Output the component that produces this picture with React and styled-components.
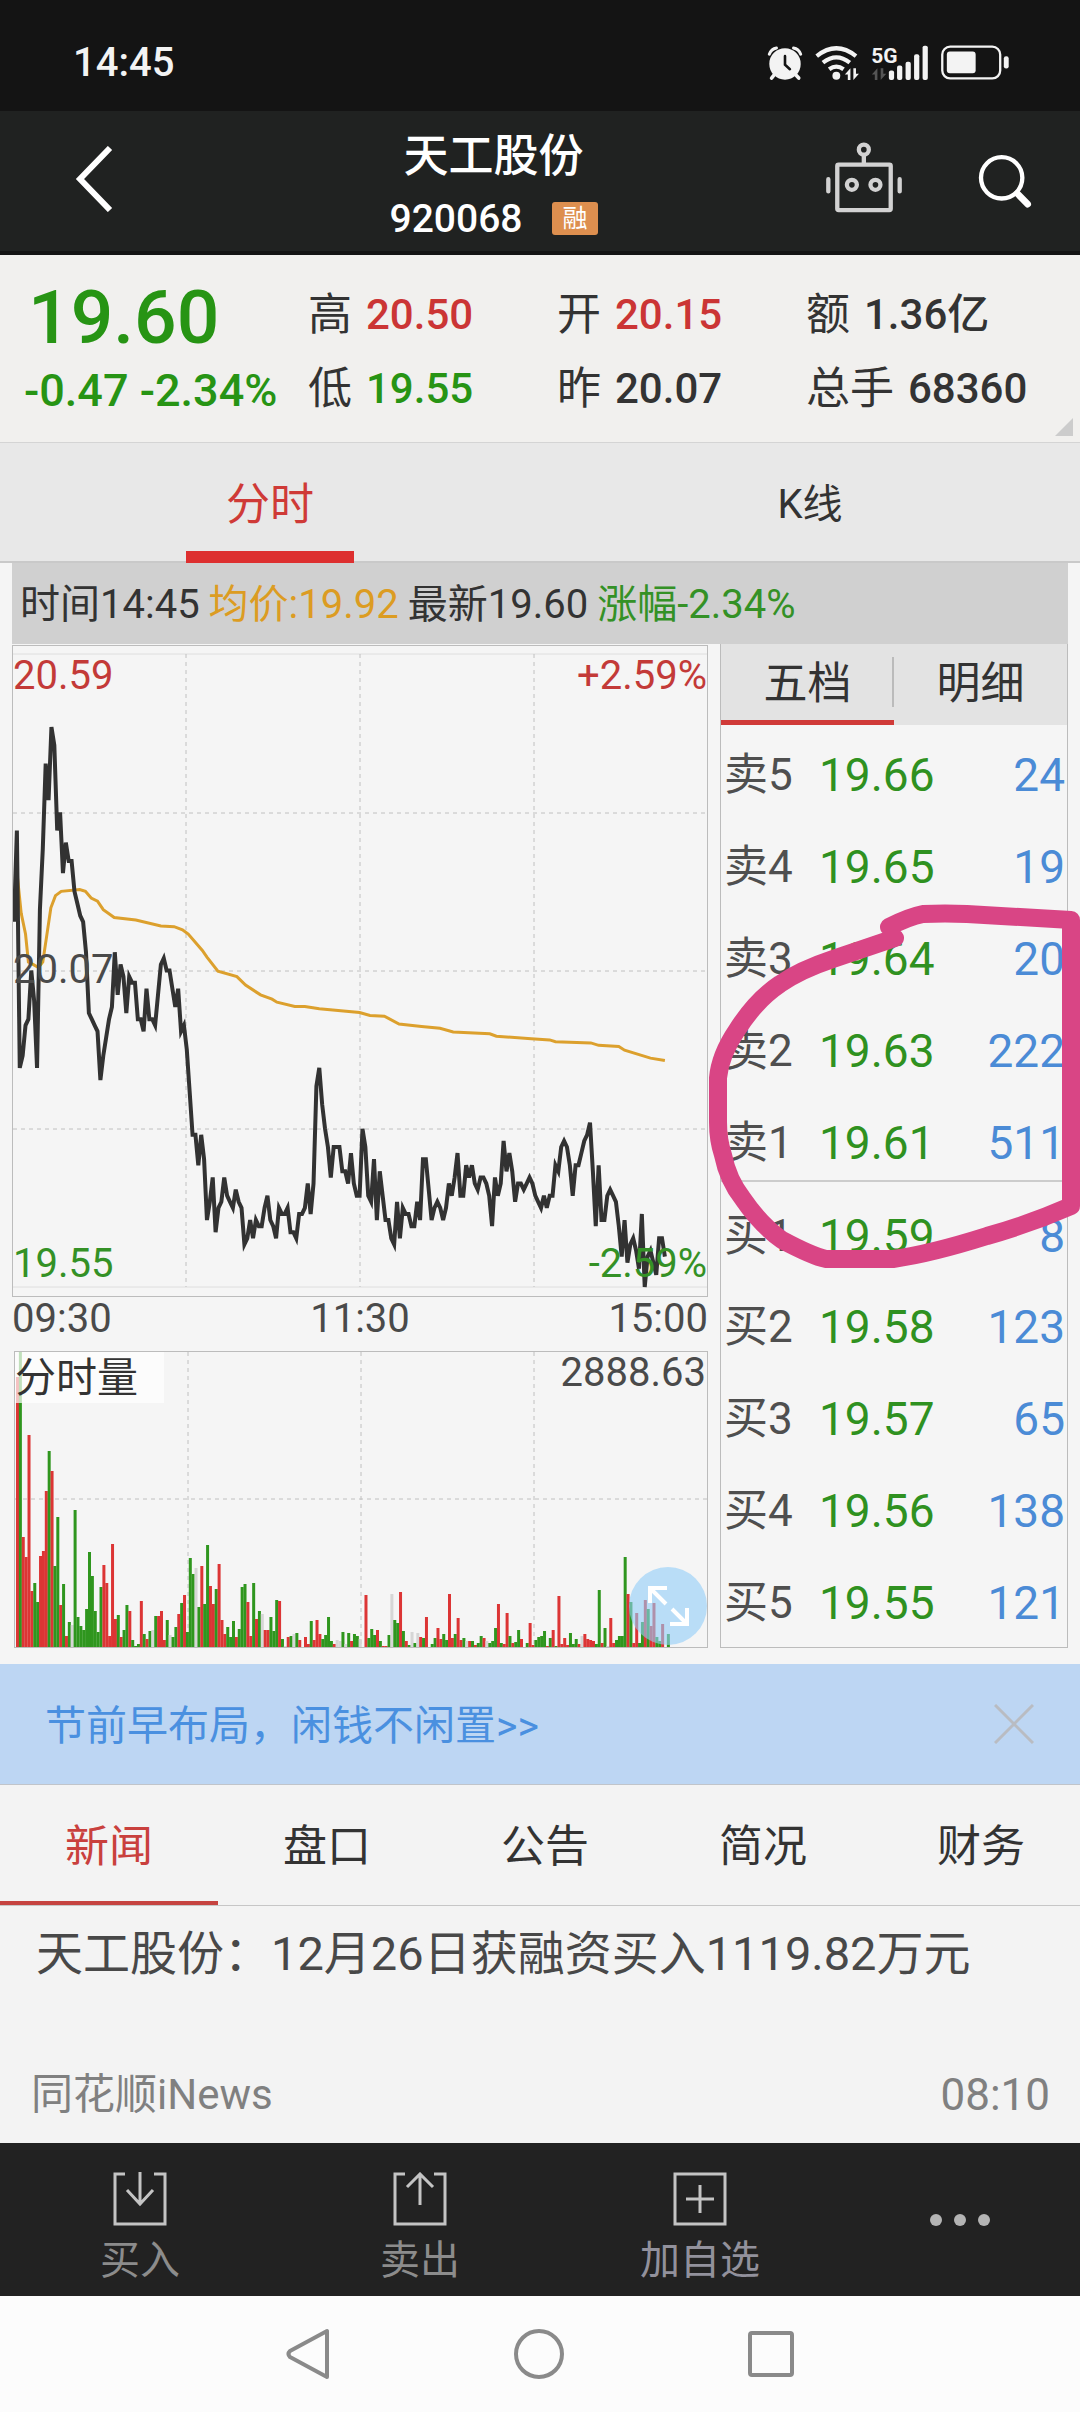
import { useState } from "react";
import styled, { createGlobalStyle } from "styled-components";

// one price per minute from 09:30, in cents
const prices = [
  2015, 2030, 1991, 1993, 1998, 1999, 2007, 2002, 1991, 2017, 2027, 2041, 2035, 2047, 2044, 2030, 2033, 2023, 2028, 2025,
  2025, 2020, 2018, 2016, 2015, 2010, 2000, 1999, 1998, 1997, 1989, 1993, 1996, 1999, 2001, 2010, 2003, 2008, 2006, 2000,
  2006, 2005, 2005, 1999, 1999, 1997, 2004, 1999, 1999, 1998, 2003, 2008, 2009, 2007, 2007, 2004, 2001, 2004, 1997, 1998,
  1994, 1987, 1980, 1980, 1975, 1980, 1976, 1966, 1969, 1973, 1964, 1968, 1969, 1973, 1970, 1969, 1968, 1971, 1969, 1968,
  1962, 1963, 1966, 1963, 1966, 1965, 1965, 1968, 1970, 1966, 1965, 1963, 1968, 1967, 1967, 1968, 1964, 1964, 1963, 1967,
  1967, 1968, 1972, 1967, 1972, 1988, 1991, 1985, 1981, 1978, 1973, 1978, 1978, 1978, 1974, 1974, 1972, 1977, 1972, 1970,
  1970, 1981, 1978, 1970, 1969, 1976, 1966, 1974, 1970, 1966, 1966, 1963, 1962, 1969, 1963, 1968, 1967, 1967, 1965, 1965,
  1969, 1966, 1976, 1976, 1971, 1966, 1968, 1969, 1968, 1966, 1968, 1972, 1970, 1973, 1977, 1970, 1970, 1975, 1973, 1975,
  1972, 1971, 1973, 1973, 1972, 1970, 1965, 1973, 1970, 1972, 1979, 1974, 1977, 1974, 1969, 1972, 1972, 1971, 1972, 1973,
  1972, 1970, 1969, 1968, 1970, 1968, 1970, 1970, 1975, 1974, 1978, 1979, 1978, 1975, 1970, 1975, 1975, 1977, 1979, 1980,
  1982, 1974, 1965, 1975, 1966, 1966, 1970, 1971, 1970, 1969, 1965, 1960, 1966, 1959, 1962, 1963, 1961, 1958, 1967, 1955,
  1960, 1961, 1959, 1957, 1963, 1963, 1960,
];

// [minute, average price in cents]
const averages = [
  [1, 2023.3], [2.5, 2016.4], [4, 2013], [5, 2008.4], [6.6, 2008], [8.5, 2007.5], [10, 2008.4], [11.2, 2012.2],
  [12.8, 2017.3], [14.4, 2019.3], [16.4, 2020], [22.8, 2020.3], [24.8, 2020], [26.8, 2018.9], [29, 2018.4], [31, 2017],
  [34.8, 2015.7], [42.3, 2015.3], [51, 2014.3], [55.6, 2014.2], [58.5, 2013.7], [60.5, 2013], [65.4, 2010.3],
  [67, 2009.2], [70.8, 2006.9], [77.4, 2006], [80.4, 2004.6], [85.6, 2003], [89.6, 2002.3], [91.3, 2001.8],
  [97.5, 2001.1], [101, 2001.1], [106, 2000.7], [120, 2000.1], [123.6, 1999.6], [128.6, 1999.5], [133.7, 1998.2],
  [141.5, 1997.8], [147.9, 1997.5], [152.5, 1996.9], [165.2, 1996.6], [167.5, 1996.2], [179.6, 1995.8], [186, 1995.6],
  [188, 1995.3], [200.3, 1995.1], [203, 1994.7], [210, 1994.5], [212, 1993.9], [221, 1992.6], [226, 1992.2],
];

// r = up, g = down, n = unchanged
const volumes =
  "r270 g295 r110 r90 r212 r56 g64 g45 r91 r96 r156 g196 r176 g81 g130 r42 g63 r11 g25 n22 g137 g30 g21 g17 g38 g95 g71 g36 g15 g60 " +
  "r82 r64 r11 r103 r28 g32 r10 g17 g42 r36 g7 g1 g3 r46 g13 r8 g16 n17 g31 r31 r36 r7 g27 n12 g10 g20 r33 g44 r52 g15 " +
  "g89 g73 n79 g40 r81 g43 g102 r61 r43 g58 r83 r27 r13 g20 g10 g26 r10 g18 g60 g63 r45 r11 g64 r28 g36 n33 r17 r17 g30 g16 " +
  "g47 r46 g8 n1 r10 g11 n13 g14 r7 n0 r10 r3 g26 r7 r27 r13 g8 g12 g30 g6 r3 n7 n6 g15 n3 g14 r6 g13 g11 n8 " +
  "n0 r52 g9 g18 g12 r17 g6 r1 r1 g12 n53 g27 g24 r55 g16 r6 g2 n15 g4 n14 r10 g9 r30 n0 g3 g9 r19 r8 g13 g7 " +
  "r53 r9 g13 r29 r7 g9 n6 r6 g6 r2 g4 g11 r9 n6 g4 g6 g19 r43 g4 r3 r34 g11 r4 g5 g17 r8 n0 g4 r24 r2 " +
  "g7 g10 g11 g16 r1 g9 r17 g1 r51 r3 r9 r2 g14 g3 g8 r3 n11 r13 r8 r7 r6 g3 g57 r4 g19 n1 r29 r4 g7 g11 " +
  "g11 g90 r53 g45 r4 r34 g4 g25 r47 g38 r21 r44 g10 g6 r23 n0 g13";

const barColors = { r: "#dc3535", g: "#2f961e", n: "#d6d6d6" };

const orders = [
  { name: "卖5", price: "19.66", amount: 24 },
  { name: "卖4", price: "19.65", amount: 19 },
  { name: "卖3", price: "19.64", amount: 20 },
  { name: "卖2", price: "19.63", amount: 222 },
  { name: "卖1", price: "19.61", amount: 511, last: true },
  { name: "买1", price: "19.59", amount: 8 },
  { name: "买2", price: "19.58", amount: 123 },
  { name: "买3", price: "19.57", amount: 65 },
  { name: "买4", price: "19.56", amount: 138 },
  { name: "买5", price: "19.55", amount: 121 },
];

const infoTabs = ["新闻", "盘口", "公告", "简况", "财务"];

const STEP = 2.88;
const toY = (cents) => 8 + ((2059 - cents) * 633) / 104;
const pricePoints = prices.map((p, i) => `${i * STEP + 1},${toY(p)}`).join(" ");
const averagePoints = averages.map(([m, p]) => `${m * STEP + 1},${toY(p)}`).join(" ");

const StatusIcons = () => (
  <Icons>
    <svg width="36" height="36" viewBox="50 40 108 110" fill="none" stroke="#f3f3f3" strokeLinecap="round">
      <circle cx="104" cy="98" r="48" fill="#f3f3f3" stroke="none" />
      <path d="M56 68Q62 52 78 49M152 68Q146 52 130 49" strokeWidth="9" />
      <path d="M72 130L63 141M136 130L146 141" strokeWidth="11" />
      <path d="M104 74V100L119 114" stroke="#141414" strokeWidth="8" />
    </svg>
    <svg width="46" height="36" viewBox="194 40 138 110" fill="none" stroke="#f3f3f3" strokeWidth="13">
      <path d="M201 74Q261 26 321 74M220 94Q261 62 302 94M239 114Q261 98 283 114" />
      <circle cx="261" cy="134" r="12" fill="#f3f3f3" stroke="none" />
      <path d="M287 130L304 111V147H296V130ZM330 128L313 147V111H321V128Z" fill="#f3f3f3" stroke="none" />
    </svg>
    <svg width="58" height="36" viewBox="358 40 174 110" fill="#f3f3f3">
      <text x="357" y="95" fontFamily="Roboto, sans-serif" fontWeight="700" fontSize="64">5G</text>
      <path d="M359 130L376 111V147H368V130ZM403 128L386 147V111H394V128Z" fill="#555" />
      <rect x="411" y="118" width="16" height="29" rx="6" />
      <rect x="436" y="103" width="16" height="44" rx="6" />
      <rect x="462" y="91" width="16" height="56" rx="6" />
      <rect x="488" y="68" width="16" height="79" rx="6" />
      <rect x="514" y="42" width="16" height="105" rx="6" />
    </svg>
    <svg width="70" height="36" viewBox="571 40 210 110" fill="#f3f3f3">
      <rect x="576" y="45" width="177" height="97" rx="24" fill="none" stroke="#f3f3f3" strokeWidth="7" />
      <rect x="590" y="60" width="88" height="66" rx="9" />
      <rect x="764" y="74" width="15" height="38" rx="7" />
    </svg>
  </Icons>
);

const PriceChart = () => (
  <PriceBox>
    <svg viewBox="0 0 694 650" preserveAspectRatio="none" fill="none">
      <path d="M0 8H694M0 641H694" stroke="#dedede" />
      <path
        d="M0 167H694M0 325H694M0 483H694M173 8V641M347 8V641M521 8V641"
        stroke="#c0c0c0"
        strokeDasharray="4 4"
      />
      <polyline points={averagePoints} stroke="#dca02d" strokeWidth="3" />
      <polyline points={pricePoints} stroke="#323232" strokeWidth="4" />
    </svg>
    <Scale>
      <ScaleRow>
        <Red>20.59</Red>
        <Red>+2.59%</Red>
      </ScaleRow>
      <ScaleRow>20.07</ScaleRow>
      <ScaleRow>
        <Green>19.55</Green>
        <Green>-2.59%</Green>
      </ScaleRow>
    </Scale>
  </PriceBox>
);

const VolumeChart = () => (
  <VolumeBox>
    <svg viewBox="0 0 692 295" preserveAspectRatio="none" fill="none">
      <path d="M0 147H692M173 0V295M346 0V295M519 0V295" stroke="#c0c0c0" strokeDasharray="4 4" />
      {volumes.split(" ").map((bar, i) => {
        const height = Number(bar.slice(1));
        return (
          <rect key={i} x={i * STEP + 1} y={295 - height} width="3" height={height} fill={barColors[bar[0]]} />
        );
      })}
    </svg>
    <VolumeName>分时量</VolumeName>
    <VolumeMax>2888.63</VolumeMax>
    <Expand type="button" aria-label="全屏">
      <svg width="42" height="42" viewBox="0 0 42 42" fill="none" stroke="#fff" strokeWidth="4">
        <path d="M3 18V3H20M3 3L19 19M40 23V39H23M40 39L25 24" />
      </svg>
    </Expand>
  </VolumeBox>
);

const OrderBook = () => (
  <Book>
    <BookTabs>
      <BookTab type="button" $active>五档</BookTab>
      <BookTab type="button">明细</BookTab>
    </BookTabs>
    <BookTable>
      <tbody>
        {orders.map(({ name, price, amount, last }) => (
          <BookRow key={name} $last={last}>
            <th scope="row">{name}</th>
            <td className="price">{price}</td>
            <td className="amount">{amount}</td>
          </BookRow>
        ))}
      </tbody>
    </BookTable>
    <Marker viewBox="708 900 372 372" fill="none">
      <path
        d="M889 927Q908 917 923 914Q945 913 967 914L1071 920V1206Q1030 1224 987 1236Q930 1254 893 1259H826Q812 1256 782 1240Q760 1224 743 1199Q728 1180 723 1155Q718 1140 718 1122V1078Q720 1055 737 1030Q756 1000 780 984Q800 970 833 959L895 938"
        stroke="#d94585"
        strokeWidth="18"
        strokeLinecap="round"
        strokeLinejoin="round"
      />
    </Marker>
  </Book>
);

const App = () => {
  const [tab, setTab] = useState(infoTabs[0]);
  return (
    <Page>
      <GlobalStyle />
      <StatusBar>
        <span>14:45</span>
        <StatusIcons />
      </StatusBar>
      <Header>
        <Back type="button" aria-label="返回">
          <svg width="38" height="66" viewBox="0 0 38 66" fill="none" stroke="#fff" strokeWidth="6">
            <path d="M35 2L5 33L35 64" />
          </svg>
        </Back>
        <Title>
          <h1>天工股份</h1>
          <Code>
            920068 <Tag>融</Tag>
          </Code>
        </Title>
        <Actions>
          <IconButton type="button" aria-label="智能助手">
            <svg width="78" height="79" viewBox="225 335 235 236" fill="none" stroke="#d2d2d2" strokeWidth="13">
              <circle cx="342" cy="357" r="15" />
              <path d="M342 372V400" />
              <rect x="262" y="402" width="161" height="137" rx="4" />
              <circle cx="306" cy="463" r="15" />
              <circle cx="377" cy="463" r="15" />
              <path d="M235 446V483M450 446V483" strokeLinecap="round" />
            </svg>
          </IconButton>
          <IconButton type="button" aria-label="搜索">
            <svg width="55" height="57" viewBox="685 370 165 170" fill="none" stroke="#fff" strokeLinecap="round">
              <circle cx="756" cy="444" r="62" strokeWidth="13" />
              <path d="M803 491L834 523" strokeWidth="20" />
            </svg>
          </IconButton>
        </Actions>
      </Header>

      <Quote>
        <Latest>
          <strong>19.60</strong>
          <span>-0.47 -2.34%</span>
        </Latest>
        <Stats>
          <Stat $color="#cb3535"><dt>高</dt><dd>20.50</dd></Stat>
          <Stat $color="#279414"><dt>低</dt><dd>19.55</dd></Stat>
        </Stats>
        <Stats>
          <Stat $color="#cb3535"><dt>开</dt><dd>20.15</dd></Stat>
          <Stat><dt>昨</dt><dd>20.07</dd></Stat>
        </Stats>
        <Stats>
          <Stat><dt>额</dt><dd>1.36亿</dd></Stat>
          <Stat><dt>总手</dt><dd>68360</dd></Stat>
        </Stats>
        <Corner />
      </Quote>

      <ChartTabs>
        <ChartTab type="button" $active>分时</ChartTab>
        <ChartTab type="button">K线</ChartTab>
      </ChartTabs>

      <Market>
        <InfoBar>
          <span>时间14:45</span>
          <Amber>均价:19.92</Amber>
          <span>最新19.60</span>
          <Green>涨幅-2.34%</Green>
        </InfoBar>
        <div>
          <PriceChart />
          <Times>
            <span>09:30</span>
            <span>11:30</span>
            <span>15:00</span>
          </Times>
          <VolumeChart />
        </div>
        <OrderBook />
      </Market>

      <Banner>
        <a href="#promo">节前早布局，闲钱不闲置&gt;&gt;</a>
        <IconButton type="button" aria-label="关闭">
          <svg width="40" height="40" viewBox="0 0 40 40" stroke="#b9bcc2" strokeWidth="3">
            <path d="M1 1L39 39M39 1L1 39" />
          </svg>
        </IconButton>
      </Banner>

      <InfoTabs>
        {infoTabs.map((text) => (
          <InfoTab type="button" key={text} $active={text === tab} onClick={() => setTab(text)}>
            {text}
          </InfoTab>
        ))}
      </InfoTabs>
      <News>
        <a href="#news">天工股份：12月26日获融资买入1119.82万元</a>
        <NewsMeta>
          <span>同花顺iNews</span>
          <time>08:10</time>
        </NewsMeta>
      </News>

      <Toolbar>
        <Tool type="button">
          <svg width="54" height="54" viewBox="0 0 54 54" fill="none" stroke="#c4c4c4" strokeWidth="3">
            <path d="M12 2H2V52H52V2H41M27 0V31M14 18L27 32L40 18" />
          </svg>
          买入
        </Tool>
        <Tool type="button">
          <svg width="54" height="54" viewBox="0 0 54 54" fill="none" stroke="#c4c4c4" strokeWidth="3">
            <path d="M12 2H2V52H52V2H41M27 33V2M14 15L27 2L40 15" />
          </svg>
          卖出
        </Tool>
        <Tool type="button" $color="#92919c">
          <svg width="54" height="54" viewBox="0 0 54 54" fill="none" stroke="#c4c4c4" strokeWidth="3">
            <path d="M2 2H52V52H2ZM27 13V41M13 27H41" />
          </svg>
          加自选
        </Tool>
        <More type="button" aria-label="更多">
          <svg width="60" height="12" viewBox="0 0 60 12" fill="#b4b4b4">
            <circle cx="6" cy="6" r="6" />
            <circle cx="30" cy="6" r="6" />
            <circle cx="54" cy="6" r="6" />
          </svg>
        </More>
      </Toolbar>

      <SystemNav>
        <IconButton type="button" aria-label="后退">
          <svg width="44" height="52" viewBox="0 0 44 52" fill="none" stroke="#8a8a8a" strokeWidth="4" strokeLinejoin="round">
            <path d="M41 3V49L4 29Q1 26 4 23Z" />
          </svg>
        </IconButton>
        <IconButton type="button" aria-label="主页">
          <svg width="50" height="50" viewBox="0 0 50 50" fill="none" stroke="#8a8a8a" strokeWidth="4">
            <circle cx="25" cy="25" r="23" />
          </svg>
        </IconButton>
        <IconButton type="button" aria-label="最近任务">
          <svg width="46" height="46" viewBox="0 0 46 46" fill="none" stroke="#8a8a8a" strokeWidth="4">
            <rect x="2" y="2" width="42" height="42" rx="2" />
          </svg>
        </IconButton>
      </SystemNav>
    </Page>
  );
};

const GlobalStyle = createGlobalStyle`
  * {
    box-sizing: border-box;
    margin: 0;
    padding: 0;
  }
  body {
    background: #f3f3f3;
    color: #333;
    font-family: Roboto, "Noto Sans CJK SC", sans-serif;
  }
  button {
    border: none;
    background: none;
    font: inherit;
    color: inherit;
    cursor: pointer;
  }
  a {
    color: inherit;
    text-decoration: none;
  }
  svg {
    display: block;
  }
`;

const Page = styled.div`
  display: flex;
  flex-direction: column;
  min-height: 100vh;
`;

const Red = styled.span`
  color: #c33a38;
`;

const Green = styled.span`
  color: #349126;
`;

const Amber = styled.span`
  color: #dc9c22;
`;

const StatusBar = styled.div`
  display: flex;
  align-items: center;
  justify-content: space-between;
  height: 111px;
  padding: 14px 70px 0 73px;
  background: #141414;
  color: #f3f3f3;
  font-size: 40px;
  font-weight: 500;
`;

const Icons = styled.div`
  display: flex;
  gap: 11px;
`;

const Header = styled.header`
  display: flex;
  align-items: center;
  height: 144px;
  border-bottom: 4px solid #141414;
  background: #202221;
  color: #fff;
`;

const Back = styled.button`
  width: 162px;
  padding: 0 0 4px 75px;
`;

const Title = styled.div`
  flex: 1;
  display: flex;
  flex-direction: column;
  align-items: center;
  padding-top: 13px;
  h1 {
    font-size: 45px;
    font-weight: 500;
    line-height: 62px;
  }
`;

const Code = styled.div`
  display: flex;
  align-items: center;
  gap: 30px;
  font-size: 39px;
  font-weight: 500;
  line-height: 62px;
`;

const Tag = styled.span`
  padding: 0 10px;
  border-radius: 3px;
  background: #dd8f4f;
  font-size: 25px;
  font-weight: 400;
  line-height: 33px;
`;

const Actions = styled.div`
  display: flex;
  align-items: center;
  gap: 75px;
  padding-right: 47px;
`;

const IconButton = styled.button`
  display: flex;
`;

const Quote = styled.section`
  position: relative;
  display: grid;
  grid-template-columns: 308fr 249fr 249fr 274fr;
  height: 187px;
  padding-top: 18px;
  background: #f1f0ee;
`;

const Latest = styled.div`
  display: flex;
  flex-direction: column;
  padding-left: 24px;
  color: #279414;
  font-weight: 500;
  white-space: nowrap;
  strong {
    padding-left: 4px;
    font-size: 75px;
    font-weight: 500;
    line-height: 88px;
  }
  span {
    font-size: 45px;
    line-height: 60px;
  }
`;

const Stats = styled.dl`
  display: flex;
  flex-direction: column;
  padding-top: 5px;
`;

const Stat = styled.div`
  display: flex;
  gap: 14px;
  line-height: 74px;
  white-space: nowrap;
  dt {
    font-size: 44px;
  }
  dd {
    color: ${({ $color }) => $color || "#333"};
    font-size: 42px;
    font-weight: 500;
  }
`;

const Corner = styled.i`
  position: absolute;
  right: 7px;
  bottom: 6px;
  border: 9px solid #ccc;
  border-top-color: transparent;
  border-left-color: transparent;
`;

const ChartTabs = styled.nav`
  display: grid;
  grid-template-columns: 1fr 1fr;
  justify-items: center;
  height: 121px;
  border-top: 1px solid #d4d4d4;
  border-bottom: 2px solid #c9c9c9;
  background: #e8e8e8;
`;

const ChartTab = styled.button`
  width: 168px;
  margin-bottom: -2px;
  padding-top: 8px;
  border-bottom: 12px solid ${({ $active }) => ($active ? "#dd2f2f" : "transparent")};
  color: ${({ $active }) => ($active ? "#cf3a37" : "#333")};
  font-size: ${({ $active }) => ($active ? "44px" : "40px")};
`;

const Market = styled.main`
  display: grid;
  grid-template-columns: 1fr 348px;
  column-gap: 12px;
  padding: 0 12px 16px;
  background: #f5f5f5;
`;

const InfoBar = styled.div`
  grid-column: 1 / -1;
  display: flex;
  align-items: center;
  gap: 9px;
  height: 81px;
  padding: 0 0 5px 8px;
  background: #d0d0d0;
  font-size: 40px;
  white-space: nowrap;
`;

const PriceBox = styled.div`
  position: relative;
  height: 652px;
  margin-top: 1px;
  border: 1px solid #bcbcbc;
  > svg {
    width: 100%;
    height: 100%;
  }
`;

const Scale = styled.div`
  position: absolute;
  inset: 0;
  display: flex;
  flex-direction: column;
  justify-content: space-between;
  padding: 7px 0 9px;
  color: #4a4a4a;
  font-size: 40px;
  line-height: 46px;
`;

const ScaleRow = styled.div`
  display: flex;
  justify-content: space-between;
`;

const Times = styled.div`
  display: flex;
  align-items: center;
  justify-content: space-between;
  height: 54px;
  padding-bottom: 11px;
  color: #4a4a4a;
  font-size: 40px;
`;

const VolumeBox = styled.div`
  position: relative;
  height: 297px;
  margin-left: 2px;
  border: 1px solid #bcbcbc;
  > svg {
    width: 100%;
    height: 100%;
  }
`;

const VolumeName = styled.span`
  position: absolute;
  top: 0;
  left: 0;
  width: 149px;
  padding-top: 2px;
  background: rgba(255, 255, 255, 0.7);
  font-size: 41px;
  line-height: 49px;
`;

const VolumeMax = styled.span`
  position: absolute;
  top: 0;
  right: 1px;
  color: #4a4a4a;
  font-size: 40px;
  line-height: 42px;
`;

const Expand = styled.button`
  position: absolute;
  right: 0;
  bottom: 2px;
  display: grid;
  place-items: center;
  width: 78px;
  height: 78px;
  border-radius: 50%;
  background: rgba(145, 205, 248, 0.6);
`;

const Book = styled.section`
  position: relative;
  border: 1px solid #bcbcbc;
  border-top: none;
`;

const BookTabs = styled.div`
  display: grid;
  grid-template-columns: 1fr 1fr;
  height: 81px;
  background: #e3e3e3;
`;

const BookTab = styled.button`
  padding-bottom: 4px;
  border-bottom: 5px solid ${({ $active }) => ($active ? "#d03a38" : "transparent")};
  background: ${({ $active }) => ($active ? "linear-gradient(#bbb, #bbb) right center / 2px 50px no-repeat" : "none")};
  font-size: 44px;
`;

const BookTable = styled.table`
  width: 100%;
  margin-top: -4px;
  border-collapse: collapse;
  font-size: 46px;
  line-height: 52px;
`;

const BookRow = styled.tr`
  height: 92px;
  border-bottom: ${({ $last }) => ($last ? "2px solid #ccc" : "none")};
  th,
  td {
    padding-top: 16px;
    text-align: left;
    vertical-align: middle;
  }
  th {
    width: 98px;
    padding-left: 3px;
    color: #4f4f4f;
    font-size: 44px;
    font-weight: 400;
  }
  .price {
    color: #2f9120;
  }
  .amount {
    padding-right: 2px;
    color: #4b8bd6;
    text-align: right;
  }
`;

// hand-drawn circle round the best sell orders
const Marker = styled.svg`
  position: absolute;
  top: 256px;
  left: -13px;
  width: 372px;
  height: 372px;
  pointer-events: none;
`;

const Banner = styled.aside`
  display: flex;
  align-items: center;
  justify-content: space-between;
  height: 121px;
  padding: 0 46px 0 45px;
  border-bottom: 1px solid #c0c4ca;
  background: #bdd6f3;
  color: #4a90e0;
  font-size: 41px;
  a {
    padding-bottom: 5px;
  }
`;

const InfoTabs = styled.nav`
  display: grid;
  grid-template-columns: repeat(5, 218px);
  height: 121px;
  border-bottom: 1px solid #c6c6c6;
  overflow: hidden;
`;

const InfoTab = styled.button`
  border-bottom: 4px solid ${({ $active }) => ($active ? "#c64340" : "transparent")};
  color: ${({ $active }) => ($active ? "#c9403d" : "#333")};
  font-size: 44px;
`;

const News = styled.section`
  display: flex;
  flex: 1;
  flex-direction: column;
  justify-content: space-between;
  padding: 14px 30px 18px 31px;
  color: #484848;
  a {
    padding-left: 5px;
    font-size: 47px;
    line-height: 68px;
  }
`;

const NewsMeta = styled.div`
  display: flex;
  justify-content: space-between;
  color: #808080;
  font-size: 42px;
  line-height: 60px;
  time {
    font-size: 44px;
  }
`;

const Toolbar = styled.footer`
  display: grid;
  grid-template-columns: 7fr 7fr 7fr 6fr;
  height: 153px;
  background: #222;
`;

const Tool = styled.button`
  display: flex;
  flex-direction: column;
  align-items: center;
  gap: 10px;
  padding-top: 29px;
  color: ${({ $color }) => $color || "#8c8c8c"};
  font-size: 40px;
  line-height: 50px;
`;

const More = styled.button`
  display: grid;
  place-items: center;
`;

const SystemNav = styled.nav`
  display: flex;
  align-items: center;
  justify-content: center;
  gap: 184px;
  height: 116px;
  background: #fcfcfc;
`;

export default App;
